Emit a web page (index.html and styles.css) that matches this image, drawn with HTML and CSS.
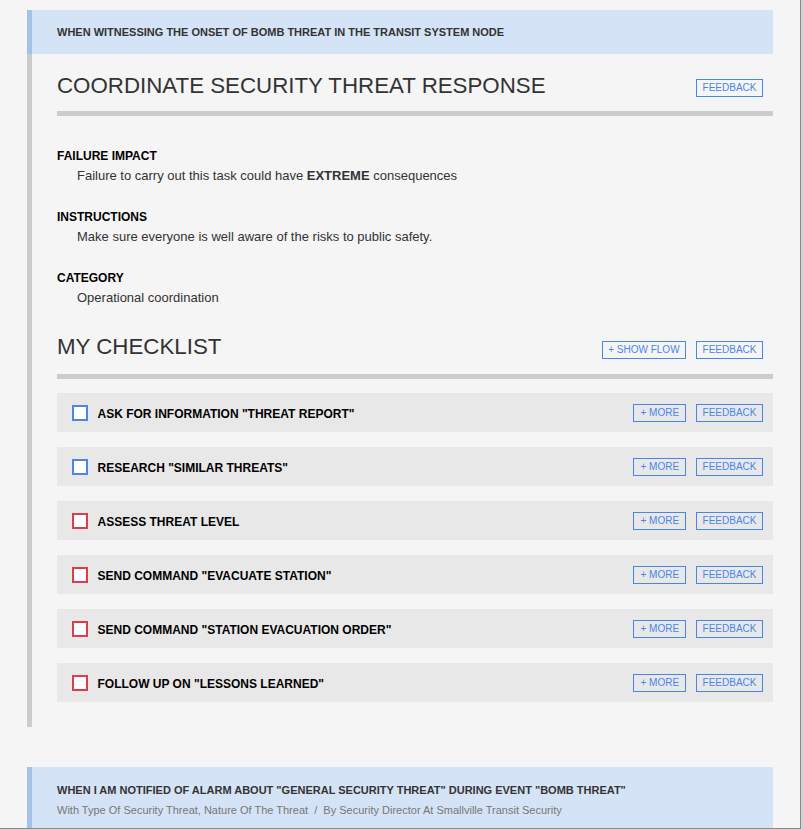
FILE: index.html
```html
<!DOCTYPE html>
<html lang="en">
<head>
<meta charset="utf-8">
<title>Coordinate Security Threat Response</title>
<link rel="stylesheet" href="styles.css">
</head>
<body>
<div class="frame">
  <section class="card">
    <header class="card-head">
      <h2 class="card-kicker">WHEN WITNESSING THE ONSET OF BOMB THREAT IN THE TRANSIT SYSTEM NODE</h2>
    </header>
    <div class="card-body">
      <div class="title-row">
        <h1 class="title">COORDINATE SECURITY THREAT RESPONSE</h1>
        <div class="actions"><button class="btn">FEEDBACK</button></div>
      </div>

      <dl class="fields">
        <div class="field">
          <dt class="field-label">FAILURE IMPACT</dt>
          <dd class="field-text">Failure to carry out this task could have <strong>EXTREME</strong> consequences</dd>
        </div>
        <div class="field">
          <dt class="field-label">INSTRUCTIONS</dt>
          <dd class="field-text">Make sure everyone is well aware of the risks to public safety.</dd>
        </div>
        <div class="field">
          <dt class="field-label">CATEGORY</dt>
          <dd class="field-text">Operational coordination</dd>
        </div>
      </dl>

      <div class="title-row checklist-head">
        <h1 class="title">MY CHECKLIST</h1>
        <div class="actions">
          <button class="btn">+ SHOW FLOW</button>
          <button class="btn">FEEDBACK</button>
        </div>
      </div>

      <ul class="checklist">
        <li class="item">
          <span class="check check-blue"></span>
          <span class="item-text">ASK FOR INFORMATION "THREAT REPORT"</span>
          <span class="item-actions"><button class="btn btn-more">+ MORE</button><button class="btn">FEEDBACK</button></span>
        </li>
        <li class="item">
          <span class="check check-blue"></span>
          <span class="item-text">RESEARCH "SIMILAR THREATS"</span>
          <span class="item-actions"><button class="btn btn-more">+ MORE</button><button class="btn">FEEDBACK</button></span>
        </li>
        <li class="item">
          <span class="check check-red"></span>
          <span class="item-text">ASSESS THREAT LEVEL</span>
          <span class="item-actions"><button class="btn btn-more">+ MORE</button><button class="btn">FEEDBACK</button></span>
        </li>
        <li class="item">
          <span class="check check-red"></span>
          <span class="item-text">SEND COMMAND "EVACUATE STATION"</span>
          <span class="item-actions"><button class="btn btn-more">+ MORE</button><button class="btn">FEEDBACK</button></span>
        </li>
        <li class="item">
          <span class="check check-red"></span>
          <span class="item-text">SEND COMMAND "STATION EVACUATION ORDER"</span>
          <span class="item-actions"><button class="btn btn-more">+ MORE</button><button class="btn">FEEDBACK</button></span>
        </li>
        <li class="item">
          <span class="check check-red"></span>
          <span class="item-text">FOLLOW UP ON "LESSONS LEARNED"</span>
          <span class="item-actions"><button class="btn btn-more">+ MORE</button><button class="btn">FEEDBACK</button></span>
        </li>
      </ul>
    </div>
  </section>

  <section class="card card-next">
    <header class="card-head">
      <h2 class="card-kicker">WHEN I AM NOTIFIED OF ALARM ABOUT "GENERAL SECURITY THREAT" DURING EVENT "BOMB THREAT"</h2>
      <p class="card-sub">With Type Of Security Threat, Nature Of The Threat &nbsp;/&nbsp; By Security Director At Smallville Transit Security</p>
    </header>
  </section>
</div>
</body>
</html>
```

FILE: styles.css
```css
* { box-sizing: border-box; }

html, body {
  margin: 0;
  padding: 0;
  background: #d4d4d4;
  font-family: "Liberation Sans", Arial, sans-serif;
}

.frame {
  width: 801px;
  height: 829px;
  background: #f5f5f5;
  border-right: 1px solid #8a8a8a;
  border-bottom: 1px solid #8a8a8a;
  padding-top: 10px;
  overflow: hidden;
}

.card {
  margin: 0 27px 0 27px;
}

.card-head {
  background: #d4e3f5;
  border-left: 5px solid #a4c2e8;
  padding: 14px 25px 14px 25px;
}

.card-kicker {
  margin: 0;
  font-size: 11px;
  line-height: 16px;
  font-weight: bold;
  color: #333;
}

.card-sub {
  margin: 4px 0 0;
  font-size: 11px;
  line-height: 16px;
  color: #777;
}

.card-body {
  border-left: 5px solid #cccccc;
  padding: 17px 0 25px 25px;
}

.title-row {
  display: flex;
  align-items: center;
  justify-content: space-between;
  border-bottom: 5px solid #cccccc;
  padding-bottom: 12px;
}

.title {
  margin: 2px 0 0;
  font-size: 22.3px;
  line-height: 26px;
  font-weight: normal;
  color: #333;
}

.actions {
  display: flex;
  gap: 10px;
  margin-top: 6px;
  margin-right: 10px;
}

.btn {
  font-family: "Liberation Sans", Arial, sans-serif;
  font-size: 10px;
  line-height: 16px;
  height: 18px;
  padding: 0 5.5px;
  background: transparent;
  border: 1px solid #4a86e8;
  color: #4a86e8;
  border-radius: 0;
  cursor: pointer;
}

.btn-more {
  padding: 0 6px;
}

.fields {
  margin: 32px 0 0;
}

.field + .field {
  margin-top: 23px;
}

.field-label {
  font-size: 12px;
  line-height: 16px;
  font-weight: bold;
  color: #000;
}

.field-text {
  margin: 2px 0 0 20px;
  font-size: 13px;
  line-height: 20px;
  color: #333;
}

.field-text strong {
  color: #333;
}

.checklist-head {
  margin-top: 25.5px;
  padding-bottom: 14px;
}

.checklist-head .title {
  margin-top: 0;
}

.checklist {
  list-style: none;
  margin: 14px 0 0;
  padding: 0;
  display: flex;
  flex-direction: column;
  gap: 15px;
}

.item {
  display: flex;
  align-items: center;
  height: 39px;
  background: #e8e8e8;
  padding: 0 10px 0 15px;
}

.check {
  width: 16px;
  height: 16px;
  background: #fff;
  border: 2px solid #4a86e8;
  flex: none;
  margin-top: 1px;
}

.check-blue { border-color: #4a86e8; }
.check-red { border-color: #dc3d4b; }

.item-text {
  margin-left: 9.5px;
  padding-top: 3px;
  font-size: 12px;
  line-height: 16px;
  font-weight: bold;
  color: #000;
  flex: 1;
}

.item-actions {
  display: flex;
  gap: 10px;
  padding-top: 1px;
}

.card-next {
  margin-top: 40px;
}

.card-next .card-head {
  padding-top: 15px;
}
```
